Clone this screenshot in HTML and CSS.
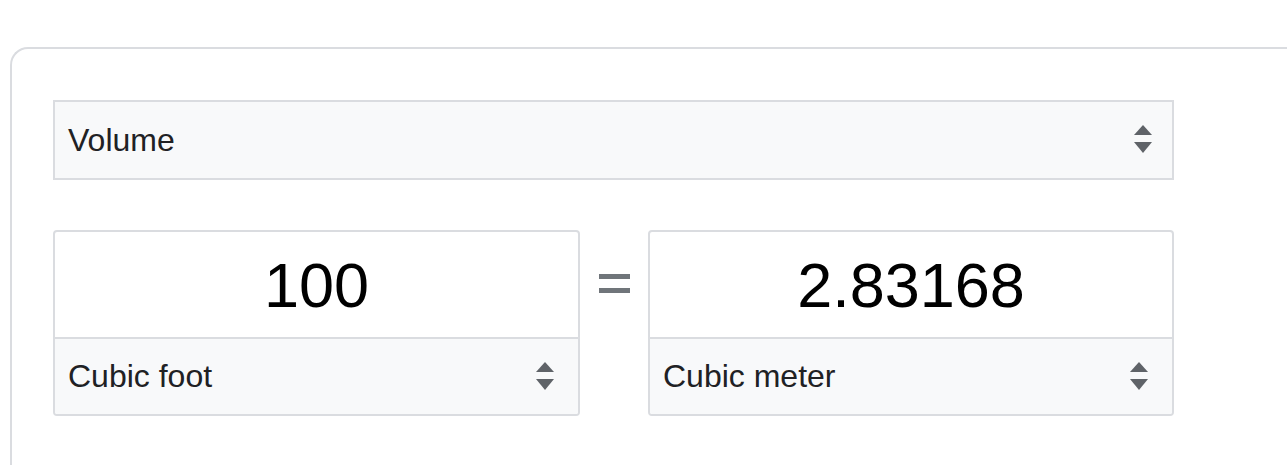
FILE: index.html
```html
<!DOCTYPE html>
<html>
<head>
<meta charset="utf-8">
<link rel="stylesheet" href="styles.css">
</head>
<body>
<div class="card">
  <div class="select select-main">
    <span class="select-label">Volume</span>
    <svg class="arrows" width="18" height="30" viewBox="0 0 18 30"><path d="M9 0 L18 10 L0 10 Z" fill="#5f6368"/><path d="M0 17 L18 17 L9 28 Z" fill="#5f6368"/></svg>
  </div>
  <div class="converter">
    <div class="unit-box">
      <div class="value">100</div>
      <div class="select select-unit">
        <span class="select-label">Cubic foot</span>
        <svg class="arrows" width="18" height="30" viewBox="0 0 18 30"><path d="M9 0 L18 10 L0 10 Z" fill="#5f6368"/><path d="M0 17 L18 17 L9 28 Z" fill="#5f6368"/></svg>
      </div>
    </div>
    <div class="equals"><span class="bar"></span><span class="bar"></span></div>
    <div class="unit-box">
      <div class="value">2.83168</div>
      <div class="select select-unit">
        <span class="select-label">Cubic meter</span>
        <svg class="arrows" width="18" height="30" viewBox="0 0 18 30"><path d="M9 0 L18 10 L0 10 Z" fill="#5f6368"/><path d="M0 17 L18 17 L9 28 Z" fill="#5f6368"/></svg>
      </div>
    </div>
  </div>
</div>
</body>
</html>
```
FILE: styles.css
```css
html, body {
  margin: 0;
  padding: 0;
  background: #fff;
  font-family: "Liberation Sans", Arial, sans-serif;
  color: #202124;
}
body {
  padding: 47px 0 0 10px;
  height: 465px;
  box-sizing: border-box;
  overflow: hidden;
}
.card {
  width: 1277px;
  height: 418px;
  box-sizing: border-box;
  border: 2px solid #dadce0;
  border-right: none;
  border-bottom: none;
  border-radius: 18px 0 0 0;
  padding: 51px 0 0 41px;
}
.select {
  display: flex;
  align-items: center;
  justify-content: space-between;
  background: #f8f9fa;
  box-sizing: border-box;
  font-size: 32px;
  color: #202124;
}
.select-main {
  width: 1121px;
  height: 80px;
  border: 2px solid #dadce0;
  padding: 0 20px 0 13px;
}
.arrows {
  display: block;
}
.converter {
  display: grid;
  grid-template-columns: 527px 68px 526px;
  margin-top: 50px;
}
.unit-box {
  display: flex;
  flex-direction: column;
  border: 2px solid #dadce0;
  border-radius: 4px;
  overflow: hidden;
  height: 186px;
  box-sizing: border-box;
}
.value {
  height: 105px;
  display: flex;
  align-items: center;
  justify-content: center;
  font-size: 63px;
  color: #000;
  border-bottom: 2px solid #dadce0;
}
.select-unit {
  flex: 1;
  padding: 0 24px 0 13px;
}
.equals {
  display: flex;
  flex-direction: column;
  align-items: center;
  padding-top: 44px;
  gap: 9px;
}
.bar {
  display: block;
  width: 31px;
  height: 5px;
  background: #70757a;
}
```
